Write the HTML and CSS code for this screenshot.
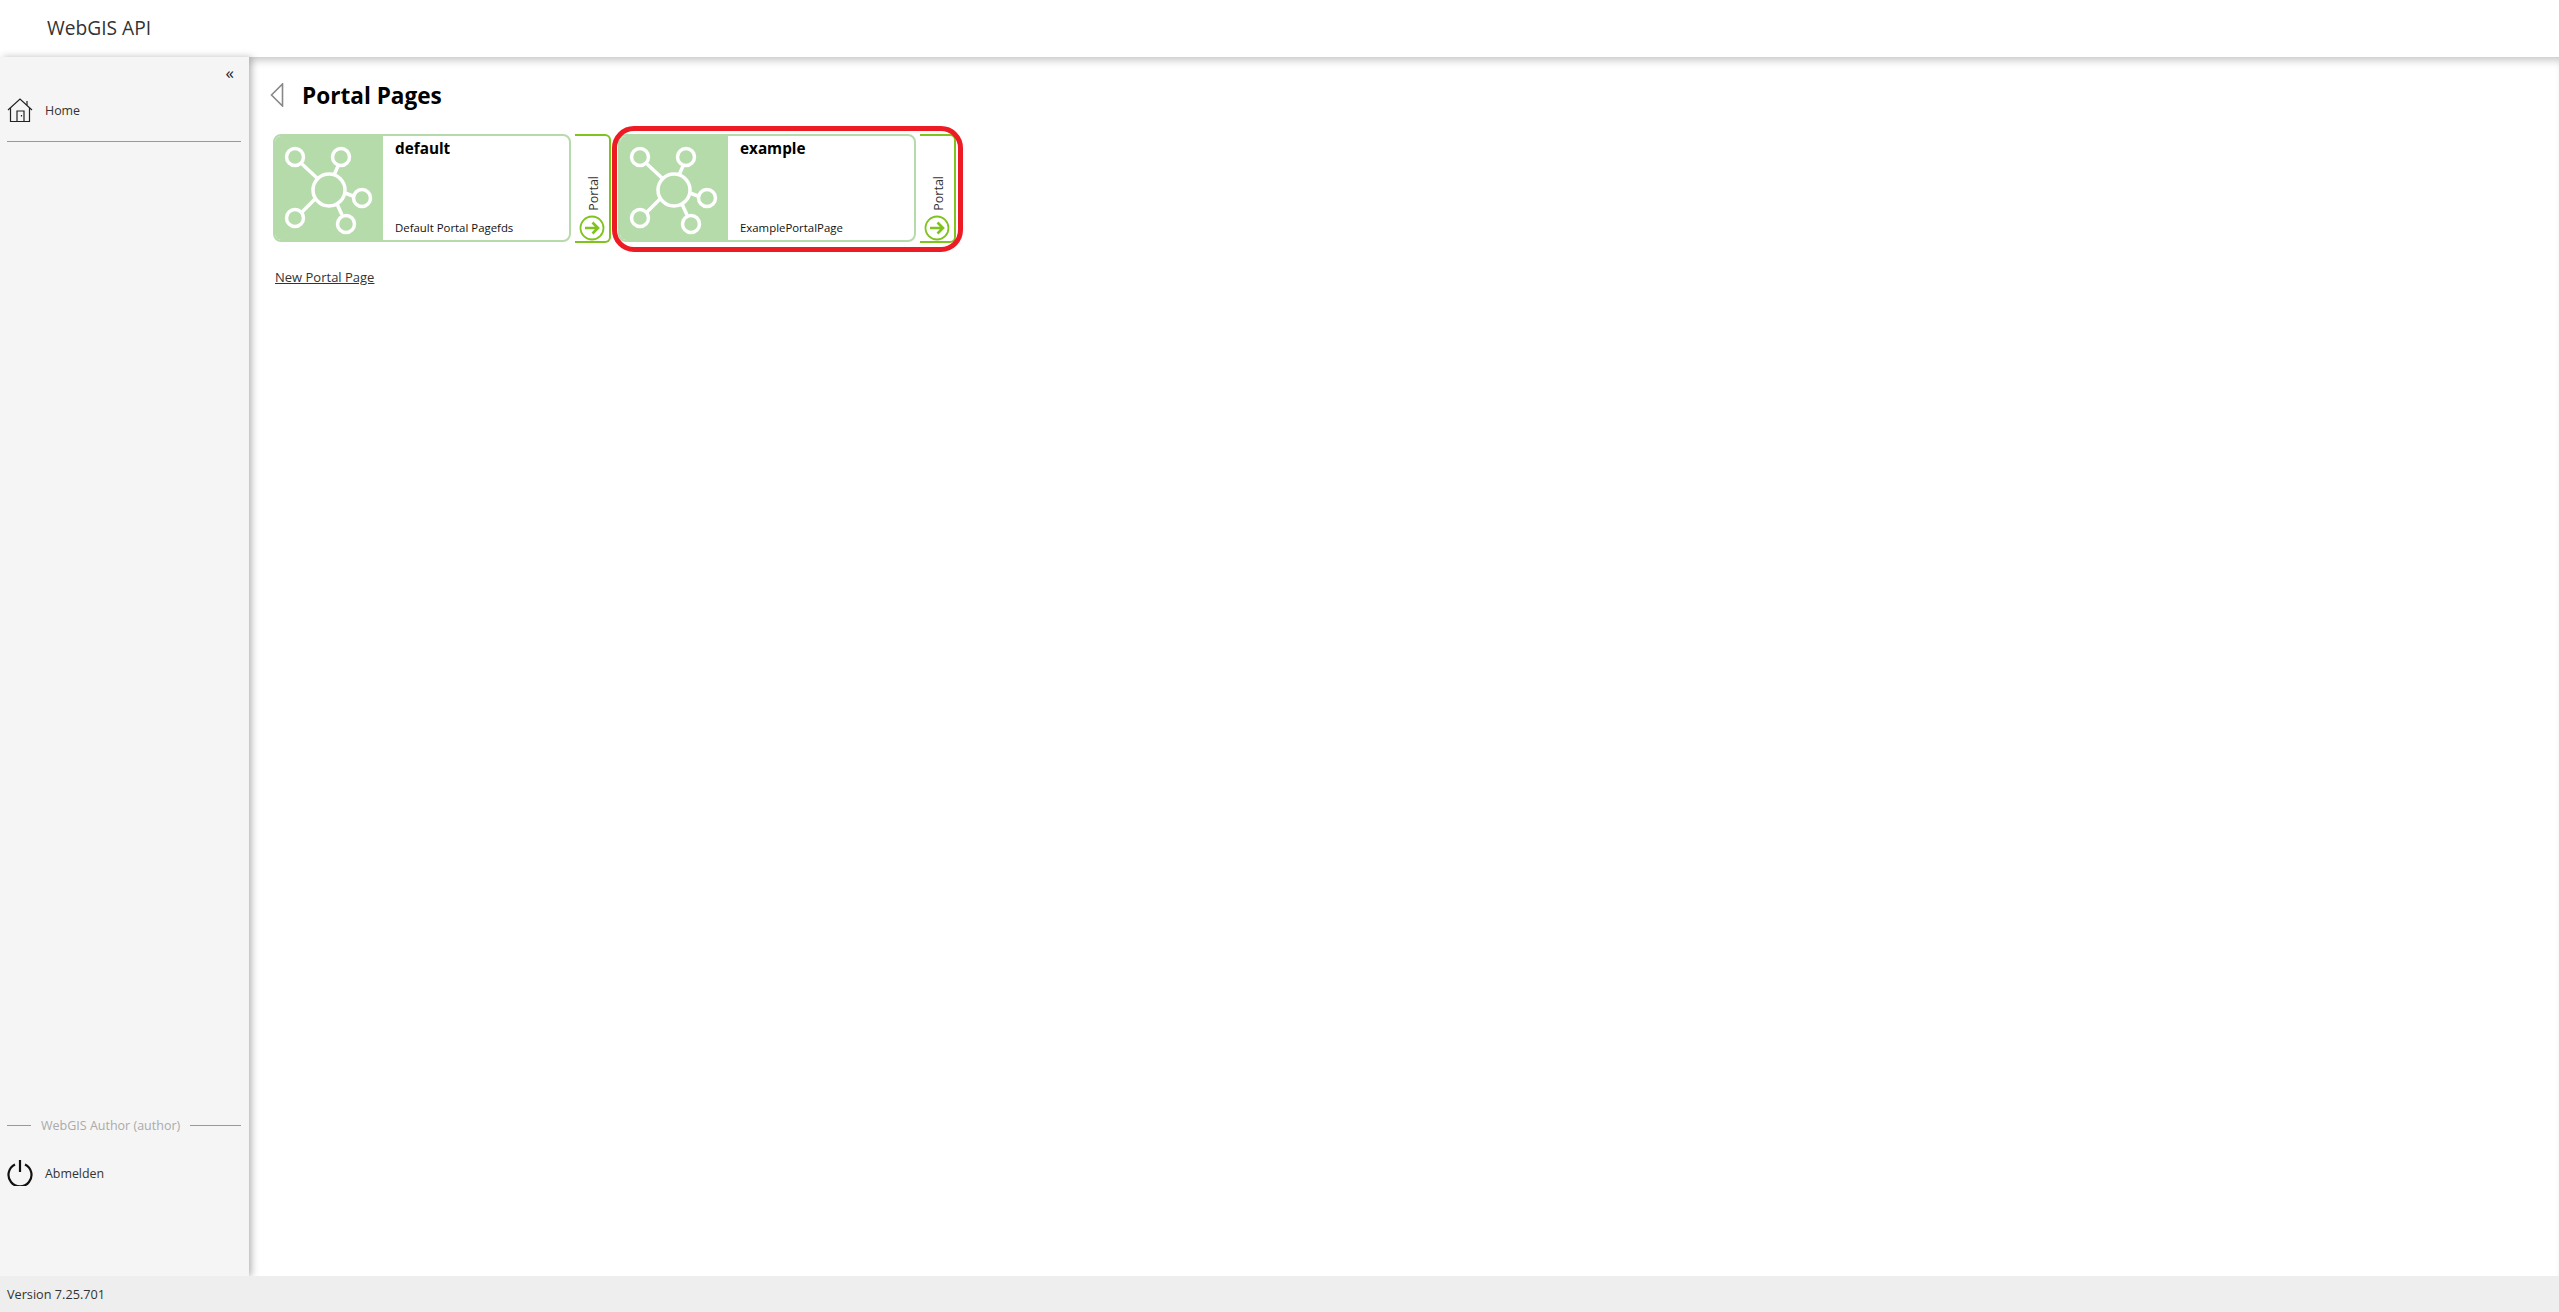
FILE: index.html
```html
<!DOCTYPE html>
<html lang="de">
<head>
    <meta charset="UTF-8">
    <meta name="viewport" content="width=device-width, initial-scale=1.0">
    <title>WebGIS API</title>
    <link rel="stylesheet" href="styles.css">
</head>
<body>
    <header class="topbar">WebGIS API</header>

    <div class="layout">
        <nav class="sidebar">
            <div class="collapse">&laquo;</div>
            <a class="nav-item nav-home">
                <svg class="nav-icon" width="26" height="26" viewBox="0 0 26 26" fill="none" stroke="#222" stroke-width="1.2">
                    <path d="M1 13 L13 2 L25 13"/>
                    <path d="M20 4 V8"/>
                    <path d="M3.5 11 V24.5 H22.5 V11"/>
                    <path d="M10 24.5 V14 H17 V24.5"/>
                    <path d="M14.5 18 V19.5"/>
                </svg>
                <span>Home</span>
            </a>
            <hr class="nav-line">

            <div class="sidebar-bottom">
                <div class="user-line">WebGIS Author (author)</div>
                <a class="nav-item nav-logout">
                    <svg class="nav-icon" width="26" height="26" viewBox="0 0 26 26" fill="none" stroke="#111" stroke-width="2.2">
                        <path d="M8 4.5 A11.5 11.5 0 1 0 18 4.5"/>
                        <path d="M13 0 V12"/>
                    </svg>
                    <span>Abmelden</span>
                </a>
            </div>
        </nav>

        <main class="content">
            <div class="page-title">
                <svg class="back" width="14" height="24" viewBox="0 0 14 24" fill="none" stroke="#888" stroke-width="1.6">
                    <path d="M12.5 1 V23 L1.5 12 Z"/>
                </svg>
                <h1>Portal Pages</h1>
            </div>

            <div class="tiles">
                <div class="tile">
                    <div class="card">
                        <div class="card-image">
                            <svg width="110" height="104" viewBox="0 0 110 104" fill="none" stroke="#fff" stroke-width="3.5">
                                <circle cx="22" cy="21" r="8.5"/>
                                <circle cx="68" cy="21" r="8.5"/>
                                <circle cx="56" cy="54" r="16"/>
                                <circle cx="89" cy="62" r="8.5"/>
                                <circle cx="22" cy="82" r="8.5"/>
                                <circle cx="73" cy="88" r="8.5"/>
                                <path d="M29 28 L44 42 M65 30 L61 39 M72 57 L80 60 M42 63 L29 76 M64 68 L69 79"/>
                            </svg>
                        </div>
                        <div class="card-text">
                            <div class="card-title">default</div>
                            <div class="card-desc">Default Portal Pagefds</div>
                        </div>
                    </div>
                    <div class="tab">
                        <span class="tab-label">Portal</span>
                        <svg width="26" height="26" viewBox="0 0 26 26" fill="none" stroke="#7fc31c">
                            <circle cx="13" cy="13" r="11.5" stroke-width="1.8"/>
                            <path d="M6 13 H19 M13.5 7.5 L19 13 L13.5 18.5" stroke-width="2.6"/>
                        </svg>
                    </div>
                </div>

                <div class="tile tile-marked">
                    <div class="card">
                        <div class="card-image">
                            <svg width="110" height="104" viewBox="0 0 110 104" fill="none" stroke="#fff" stroke-width="3.5">
                                <circle cx="22" cy="21" r="8.5"/>
                                <circle cx="68" cy="21" r="8.5"/>
                                <circle cx="56" cy="54" r="16"/>
                                <circle cx="89" cy="62" r="8.5"/>
                                <circle cx="22" cy="82" r="8.5"/>
                                <circle cx="73" cy="88" r="8.5"/>
                                <path d="M29 28 L44 42 M65 30 L61 39 M72 57 L80 60 M42 63 L29 76 M64 68 L69 79"/>
                            </svg>
                        </div>
                        <div class="card-text">
                            <div class="card-title">example</div>
                            <div class="card-desc">ExamplePortalPage</div>
                        </div>
                    </div>
                    <div class="tab">
                        <span class="tab-label">Portal</span>
                        <svg width="26" height="26" viewBox="0 0 26 26" fill="none" stroke="#7fc31c">
                            <circle cx="13" cy="13" r="11.5" stroke-width="1.8"/>
                            <path d="M6 13 H19 M13.5 7.5 L19 13 L13.5 18.5" stroke-width="2.6"/>
                        </svg>
                    </div>
                </div>
            </div>

            <a class="new-page">New Portal Page</a>
        </main>
    </div>

    <footer class="footer">Version 7.25.701</footer>
</body>
</html>
```

FILE: styles.css
```css
* {
    box-sizing: border-box;
}

html, body {
    height: 100%;
}

body {
    margin: 0;
    display: flex;
    flex-direction: column;
    font-family: "Open Sans", "Noto Sans", Arial, sans-serif;
    color: #222;
    background-color: #fff;
}

.topbar {
    height: 57px;
    flex: none;
    padding: 11px 0 0 47px;
    font-size: 19.2px;
    line-height: 34px;
    color: #333;
}

.layout {
    flex: 1;
    display: flex;
    min-height: 0;
}

/* sidebar */
.sidebar {
    width: 249px;
    flex: none;
    display: flex;
    flex-direction: column;
    padding: 0 8px 0 7px;
    background-color: #f5f5f5;
    box-shadow: 3px 0 7px rgba(0, 0, 0, 0.26);
    position: relative;
}

.collapse {
    height: 30px;
    padding: 6px 7px 0 0;
    text-align: right;
    font-size: 17px;
    line-height: 20px;
    color: #222;
}

.nav-item {
    display: flex;
    align-items: center;
    gap: 12px;
    font-size: 12.4px;
    color: #333;
}

.nav-icon {
    flex: none;
}

.nav-home {
    height: 38px;
    margin-top: 4px;
}

.nav-line {
    width: 100%;
    height: 1px;
    margin: 12px 0 0;
    border: 0;
    background-color: #999;
}

.sidebar-bottom {
    margin-top: auto;
    padding-bottom: 88px;
}

.user-line {
    display: flex;
    align-items: center;
    gap: 10px;
    height: 20px;
    font-size: 12.5px;
    color: #aaa;
    white-space: nowrap;
}

.user-line::before,
.user-line::after {
    content: "";
    height: 1px;
    background-color: #999;
}

.user-line::before {
    width: 24px;
}

.user-line::after {
    flex: 1;
}

.nav-logout {
    margin-top: 23px;
    height: 30px;
}

/* content */
.content {
    flex: 1;
    padding: 0 0 0 24px;
    box-shadow: inset 0 8px 8px -5px rgba(0, 0, 0, 0.24);
}

.page-title {
    display: flex;
    align-items: center;
    gap: 18px;
    height: 34px;
    margin: 21px 0 0 -3px;
}

.page-title h1 {
    margin: 0;
    font-size: 22.6px;
    font-weight: 700;
    color: #000;
}

.tiles {
    display: flex;
    gap: 7px;
    margin-top: 22px;
}

.tile {
    display: flex;
    gap: 4px;
    position: relative;
}

/* red marking drawn over the second tile */
.tile-marked::after {
    content: "";
    box-sizing: border-box;
    position: absolute;
    top: -8px;
    left: -6px;
    width: 351px;
    height: 126px;
    border: 5px solid #ed1c24;
    border-radius: 22px;
}

.card {
    width: 298px;
    height: 108px;
    display: flex;
    overflow: hidden;
    border: 2px solid #b5dbab;
    border-radius: 8px;
    background-color: #fff;
}

.card-image {
    width: 108px;
    flex: none;
    background-color: #b5dbab;
}

.card-image svg {
    display: block;
    margin-left: -2px;
}

.card-text {
    flex: 1;
    display: flex;
    flex-direction: column;
    justify-content: space-between;
    padding: 2px 0 5px 12px;
}

.card-title {
    font-size: 15.3px;
    font-weight: 700;
    color: #000;
}

.card-desc {
    font-size: 11.4px;
    color: #111;
}

.tab {
    width: 36px;
    height: 109px;
    display: flex;
    flex-direction: column;
    align-items: center;
    justify-content: flex-end;
    gap: 4px;
    border: 2px solid #7fc31c;
    border-left: 0;
    border-radius: 0 6px 6px 0;
}

.tab-label {
    margin-left: 3px;
    writing-mode: vertical-rl;
    transform: rotate(180deg);
    font-size: 12.5px;
    color: #333;
}

.new-page {
    display: inline-block;
    margin: 25px 0 0 2px;
    font-size: 13px;
    color: #333;
    text-decoration: underline;
}

.footer {
    height: 36px;
    flex: none;
    padding-left: 7px;
    font-size: 12.7px;
    line-height: 36px;
    color: #333;
    background-color: #eee;
    position: relative;
}
```
